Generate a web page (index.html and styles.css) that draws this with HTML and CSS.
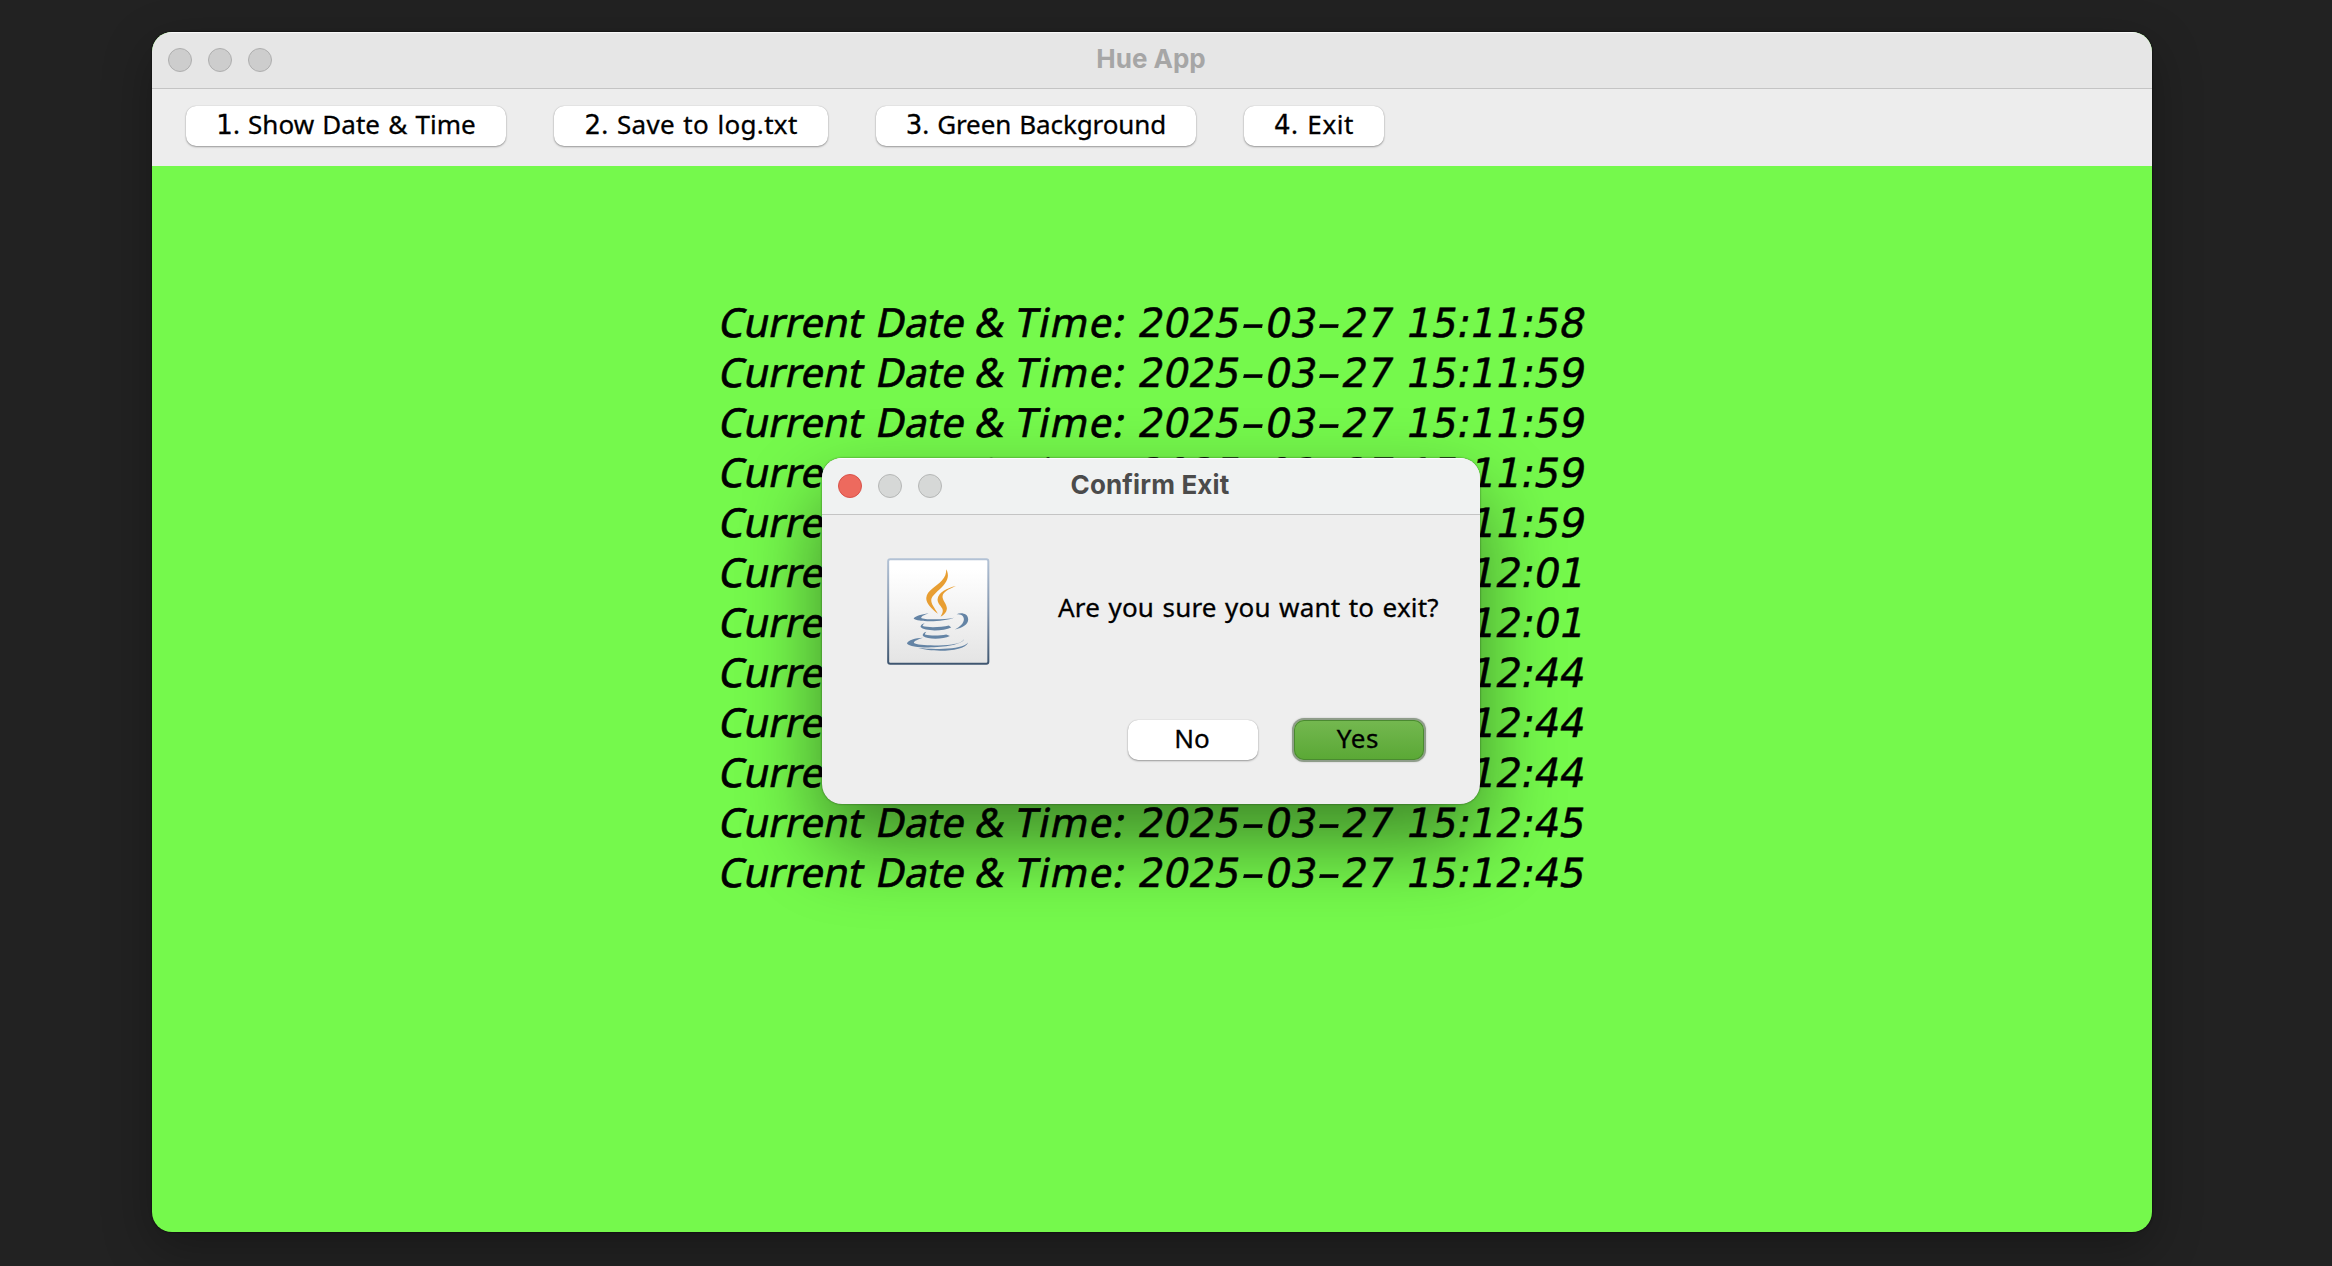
FILE: index.html
```html
<!DOCTYPE html>
<html lang="en">
<head>
<meta charset="utf-8">
<title>Hue App</title>
<link rel="stylesheet" href="styles.css">
</head>
<body>
<main class="window">
  <header class="titlebar">
    <div class="lights"><i></i><i></i><i></i></div>
    <h1>Hue App</h1>
  </header>
  <nav class="toolbar">
    <button class="btn b1"><b>1</b>. Show Date &amp; Time</button>
    <button class="btn b2"><b>2</b>. Save to log.txt</button>
    <button class="btn b3"><b>3</b>. Green Background</button>
    <button class="btn b4"><b>4</b>. Exit</button>
  </nav>
  <section class="log" id="log"></section>
</main>

<div class="dialog" role="dialog">
  <header class="titlebar">
    <div class="lights"><i class="close"></i><i></i><i></i></div>
    <h1>Confirm Exit</h1>
  </header>
  <div class="body">
    <svg class="java" viewBox="20 25 308 322" preserveAspectRatio="none">
      <defs>
        <linearGradient id="face" x1="0" y1="0" x2="0" y2="1"><stop offset="0.1" stop-color="#fff"/><stop offset="1" stop-color="#e4e4e4"/></linearGradient>
        <linearGradient id="edge" x1="0" y1="0" x2="0" y2="1"><stop offset="0" stop-color="#b3c2d5"/><stop offset="0.5" stop-color="#8396ae"/><stop offset="1" stop-color="#3f5670"/></linearGradient>
      </defs>
      <rect x="23.500" y="28.500" width="301" height="315" rx="6" fill="url(#face)" stroke="url(#edge)" stroke-width="6"/>
      <g fill="#e89e32">
        <path d="M198 59C207 76 204 91 190 107C174 125 154 138 153 151C152 164 164 177 173 193C154 178 137 161 138 145C140 123 168 111 185 93C195 82 198 72 198 59Z"/>
        <path d="M227 109C204 119 189 127 187 139C185 151 201 164 200 178C199 189 192 196 181 202C186 192 190 186 186 177C181 168 171 160 172 149C174 128 201 115 227 109Z"/>
      </g>
      <g fill="#6484a5">
        <path d="M145 191C123 194 106 199 100 207C113 219 190 218 222 205C190 211 141 211 124 206C119 202 132 196 145 191Z"/>
        <path d="M229 194C245 188 264 193 264 210C264 225 246 236 224 240C238 232 251 222 251 209C251 198 242 194 229 194Z"/>
        <path d="M133 221C123 224 120 229 121 233C132 246 189 246 213 234L206 228C184 234 143 235 127 230C127 226 130 224 133 221Z"/>
        <path d="M138 247C129 250 126 255 128 260C142 271 187 271 209 260L198 255C180 259 151 260 134 255C134 252 136 250 138 247Z"/>
        <path d="M128 265C105 266 83 272 80 282C94 303 245 296 252 269C245 279 232 283 215 285C169 291 111 288 101 281C99 275 116 269 128 265Z"/>
        <path d="M264 279C252 292 225 296 190 298C162 300 138 298 114 296C156 309 254 308 264 279Z"/>
      </g>
    </svg>
    <p>Are you sure you want to exit?</p>
  </div>
  <footer>
    <button class="btn no">No</button>
    <button class="btn yes">Yes</button>
  </footer>
</div>
<script src="app.js"></script>
</body>
</html>
```
FILE: styles.css
```css
* { box-sizing: border-box; }
body {
  margin: 0;
  height: 1266px;
  overflow: hidden;
  position: relative;
  display: flow-root;
  background: #222;
  color: #000;
  font-family: "Noto Sans", sans-serif;
}
.window {
  width: 2000px;
  height: 1200px;
  margin: 32px 0 0 152px;
  border-radius: 20px;
  overflow: hidden;
  background: #75f94c;
  display: flex;
  flex-direction: column;
  box-shadow: 0 0 2px #000, 0 16px 50px rgba(0, 0, 0, .3);
}
.titlebar {
  height: 57px;
  flex: none;
  display: grid;
  grid-template-columns: 200px 1fr 200px;
  align-items: center;
  background: #e6e6e6;
  border-bottom: 1px solid #c4c4c4;
  box-shadow: inset 0 2px 1px -1px #fafafa;
}
.titlebar h1 {
  margin: 0;
  padding: 0 2px 3px 0;
  text-align: center;
  white-space: nowrap;
  font: 700 26px "Inter", sans-serif;
  color: #a6a6a6;
}
.lights { display: flex; gap: 16px; padding-left: 16px; }
.lights i {
  width: 24px;
  height: 24px;
  border-radius: 50%;
  background: #cdcdcd;
  border: 1px solid #aeaeae;
}
.toolbar {
  height: 77px;
  flex: none;
  display: flex;
  gap: 48px;
  padding: 17px 0 0 34px;
  background: #ededed;
}
.btn {
  height: 40px;
  border: 0;
  padding: 0 0 4px;
  border-radius: 10px;
  background: #fff;
  box-shadow: 0 1px 2px rgba(0, 0, 0, .35), 0 0 1px rgba(0, 0, 0, .25);
  font: 26px "Noto Sans", sans-serif;
  word-spacing: 1.4px;
  color: #000;
  white-space: nowrap;
  -webkit-text-stroke: .3px #000;
}
.btn b { font: 26px/1 "DejaVu Sans", sans-serif; }
.b1 { width: 320px; letter-spacing: .02px; }
.b2 { width: 274px; letter-spacing: .3px; }
.b3 { width: 320px; letter-spacing: -.1px; }
.b4 { width: 140px; letter-spacing: .6px; }

.log { padding: 131px 0 0 565px; }
.line {
  height: 50px;
  display: grid;
  grid-template-columns: 157px 99px 40px 123px 268px 180px;
  align-items: baseline;
  font-size: 40px;
  line-height: 50px;
  white-space: nowrap;
  -webkit-text-stroke: .7px #000;
  transform: skewX(-11.3deg);
  transform-origin: 0 41px;
}
.line .wide { letter-spacing: 1.5px; }
.num { font-family: "DejaVu Sans", sans-serif; -webkit-text-stroke-width: .5px; }
.dash { display: inline-block; width: 25.4px; text-align: center; transform: scaleX(1.7); }
.colon { letter-spacing: -.4px; }

.dialog {
  position: absolute;
  left: 822px;
  top: 458px;
  width: 658px;
  height: 346px;
  border-radius: 20px;
  overflow: hidden;
  background: #eee;
  display: flex;
  flex-direction: column;
  box-shadow: 0 0 2px rgba(0, 0, 0, .55), 0 38px 80px rgba(0, 0, 0, .46);
}
.dialog .titlebar { background: #f0f2f2; box-shadow: inset 0 2px 1px -1px #fff; }
.dialog .titlebar h1 { color: #4b4b4b; letter-spacing: .15px; padding-bottom: 4px; }
.dialog .lights i { background: #d6d8d7; border-color: #b5b7b6; }
.dialog .lights .close { background: #ed6a5e; border-color: #d8524a; }
.body {
  display: flex;
  gap: 68.500px;
  padding: 43px 0 0 65px;
  height: 204px;
}
.java { width: 102.500px; height: 107px; flex: none; }
.body p {
  margin: 32px 0 0;
  font-size: 26px;
  line-height: 35px;
  letter-spacing: .2px;
  word-spacing: 1.4px;
  white-space: nowrap;
  -webkit-text-stroke: .3px #000;
}
footer { display: flex; justify-content: flex-end; gap: 36px; padding: 1px 56px 0 0; }
footer .btn { width: 130px; padding: 0 2px 5px 0; }
.yes {
  letter-spacing: .6px;
  background: linear-gradient(#74b850, #5aa835);
  box-shadow: inset 0 0 0 1px #4a8a30, 0 0 0 2px #8f9d8a, 0 0 2px 2px rgba(0, 0, 0, .2);
}
```
FILE: app.js
```js
const times = ["15:11:58", "15:11:59", "15:11:59", "15:11:59", "15:11:59", "15:12:01",
  "15:12:01", "15:12:44", "15:12:44", "15:12:44", "15:12:45", "15:12:45"];
const date = "2025-03-27".replace(/-/g, '<span class="dash">-</span>');
document.getElementById("log").innerHTML = times.map(t =>
  `<div class="line"><span>Current</span><span>Date</span><span>&amp;</span><span class="wide">Time:</span>` +
  `<span class="num">${date}</span><span class="num">${t.replace(/:/g, '<span class="colon">:</span>')}</span></div>`
).join("");
```
